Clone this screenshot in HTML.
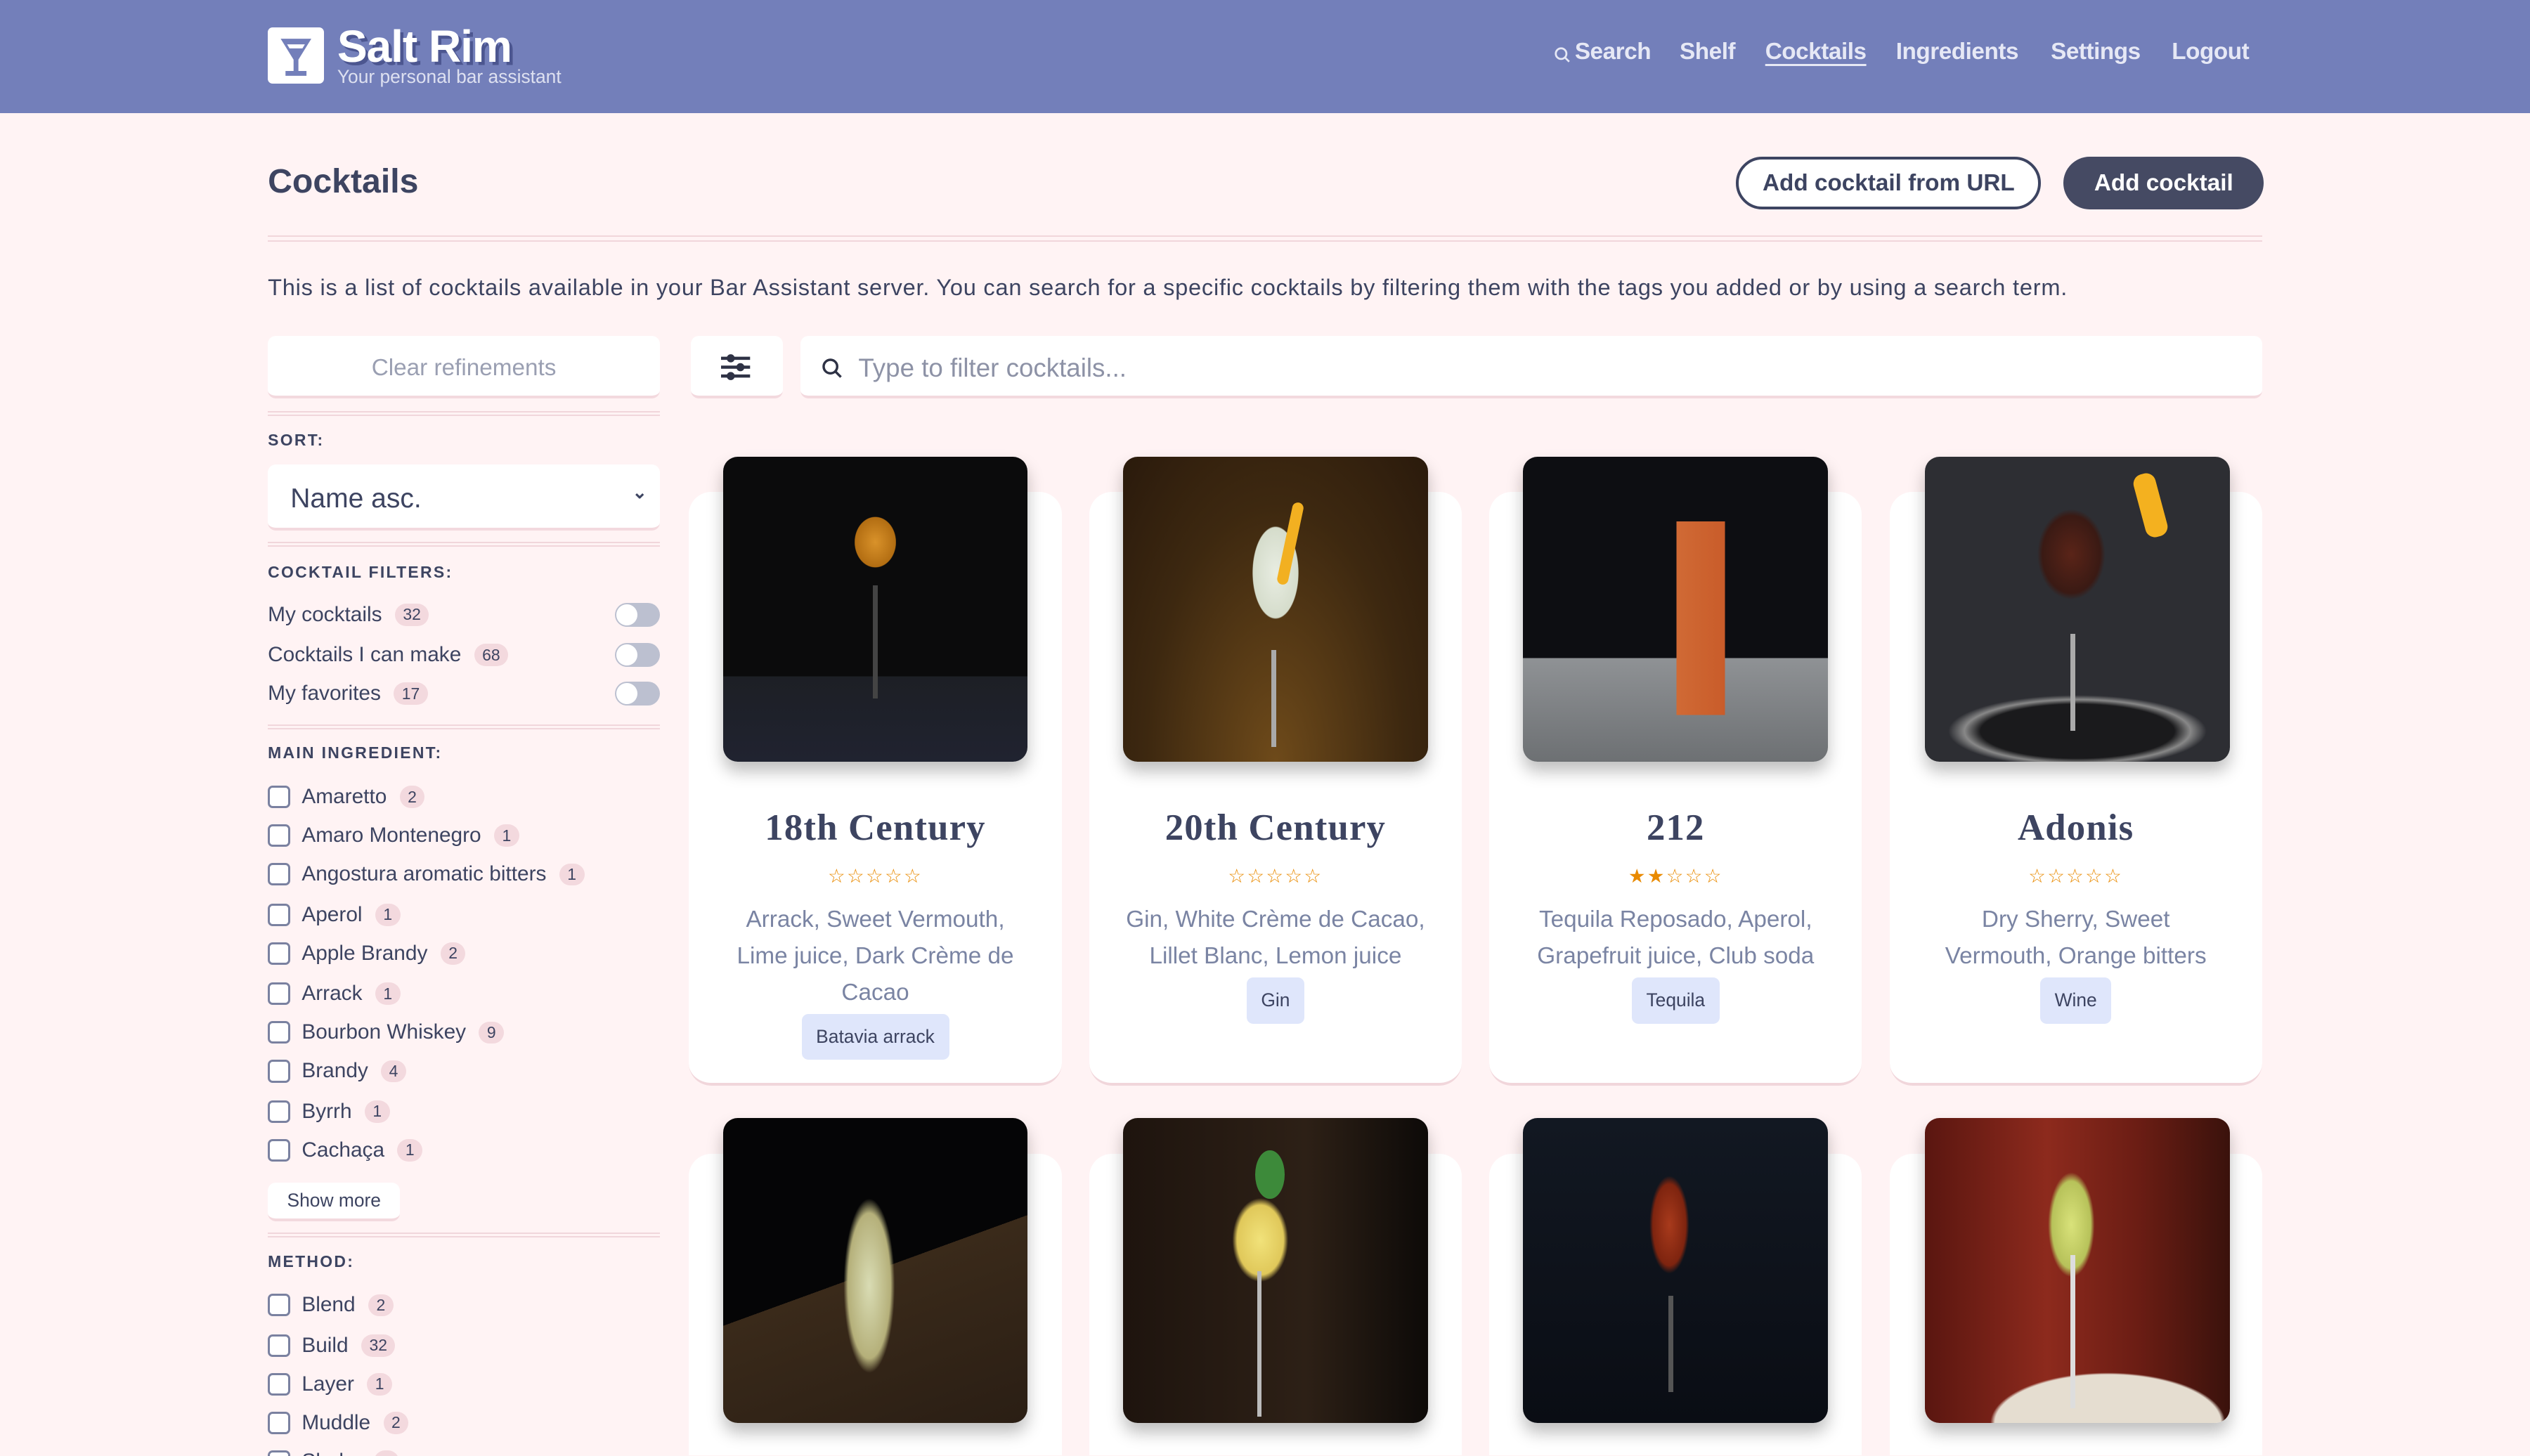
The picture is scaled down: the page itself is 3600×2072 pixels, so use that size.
<!DOCTYPE html>
<html><head><meta charset="utf-8">
<style>
html{zoom:2.29592;overflow:hidden;height:902px}
*{box-sizing:border-box;margin:0;padding:0}
body{width:1568px;height:902px;overflow:hidden;background:#fff3f4;font-family:"Liberation Sans",sans-serif;color:#3d4461;position:relative}
.a{position:absolute}
.hdr{left:0;top:0;width:1568px;height:70px;background:#737fba}
.nav{top:24px;font-size:14.5px;font-weight:bold;color:#e6e8f5;letter-spacing:-0.2px}
.btn{border-radius:17px;font-size:14.5px;font-weight:bold;display:flex;align-items:center;justify-content:center}
.line{left:166px;width:1236px;height:4px;border-top:1px solid #f1d6db;border-bottom:1px solid #f1d6db}
.box{background:#fff;border-radius:5px;border-bottom:2px solid #f3d9de}
.lbl{font-size:10px;font-weight:bold;letter-spacing:1px;left:166px}
.row{left:166px;font-size:13px;display:flex;align-items:center;height:18px}
.cnt{background:#f3d9de;border-radius:8px;font-size:10px;padding:1px 5px;margin-left:8px}
.cb{width:14px;height:14px;border:1.5px solid #7a81a0;border-radius:3px;margin-right:7px;background:#fff}
.tg{right:0;width:28px;height:15px;border-radius:8px;background:#bcc0d0;position:absolute}
.tg:after{content:"";position:absolute;left:1px;top:1px;width:13px;height:13px;border-radius:50%;background:#fff}
.sep{left:166px;width:243px;height:3px;border-top:1px solid #f1d6db;border-bottom:1px solid #f1d6db}
.card{background:#fff;border-radius:14px;width:231px;border-bottom:2px solid #f1d6db}
.img{width:189px;height:189px;border-radius:9px;box-shadow:0 6px 10px rgba(0,0,0,.25);overflow:hidden}
.t{width:231px;text-align:center;white-space:nowrap}
.ttl{font-family:"Liberation Serif",serif;font-size:23px;font-weight:bold;letter-spacing:.5px}
.st{color:#e98a00;font-size:12px;letter-spacing:1px}
.ing{font-size:14.5px;color:#7a84a3;line-height:22.5px}
.tag{display:inline-block;background:#dfe6fb;border-radius:4px;font-size:11.5px;padding:3px 9px;color:#3d4461}
</style></head><body>
<div class="a hdr"></div>
<div class="a" style="left:166px;top:17px;width:35px;height:35px;background:#fff;border-radius:3px">
<svg width="35" height="35" viewBox="0 0 35 35"><path d="M8 7 H27 L19 20 V27 H24 V30 H11 V27 H16 V20 Z" fill="#737fba"/><path d="M12 10.5 H23 L21.5 13 H13.5Z" fill="#fff"/></svg></div>
<div class="a" style="left:209px;top:13px;font-size:28px;font-weight:bold;color:#fff;text-shadow:2px 2px 0 #4c5690;letter-spacing:-0.5px;line-height:32px">Salt Rim</div>
<div class="a" style="left:209px;top:41px;font-size:11.5px;color:#dde0f0">Your personal bar assistant</div>
<div class="a nav" style="left:963px;top:26px"><svg width="10" height="10" viewBox="0 0 10 10"><circle cx="4.5" cy="4.5" r="3.3" stroke="#e6e8f5" stroke-width="1.2" fill="none"/><line x1="7" y1="7" x2="9.5" y2="9.5" stroke="#e6e8f5" stroke-width="1.2"/></svg></div>
<div class="a nav" style="left:976px">Search</div>
<div class="a nav" style="left:1041px">Shelf</div>
<div class="a nav" style="left:1094px;text-decoration:underline;text-underline-offset:3px">Cocktails</div>
<div class="a nav" style="left:1175px">Ingredients</div>
<div class="a nav" style="left:1271px">Settings</div>
<div class="a nav" style="left:1346px">Logout</div>

<div class="a" style="left:166px;top:100px;font-size:21px;font-weight:bold">Cocktails</div>
<div class="a btn" style="left:1076px;top:97px;width:189px;height:33px;border:2px solid #3d4461;background:#fff">Add cocktail from URL</div>
<div class="a btn" style="left:1279px;top:97px;width:124px;height:33px;background:#454a63;color:#fff">Add cocktail</div>
<div class="a line" style="top:146px"></div>
<div class="a" style="left:166px;top:170px;font-size:14.2px;letter-spacing:0.33px;white-space:nowrap">This is a list of cocktails available in your Bar Assistant server. You can search for a specific cocktails by filtering them with the tags you added or by using a search term.</div>

<div class="a box" style="left:166px;top:208px;width:243px;height:39px;color:#9a9fb2;font-size:14.5px;display:flex;align-items:center;justify-content:center;padding-top:3px">Clear refinements</div>
<div class="a box" style="left:428px;top:208px;width:57px;height:39px"><svg class="a" style="left:19px;top:11px" width="18" height="17" viewBox="0 0 18 17"><g stroke="#2e3245" stroke-width="2"><line x1="0" y1="3" x2="18" y2="3"/><line x1="0" y1="8.5" x2="18" y2="8.5"/><line x1="0" y1="14" x2="18" y2="14"/></g><g fill="#2e3245"><circle cx="6" cy="3" r="2.5"/><circle cx="12" cy="8.5" r="2.5"/><circle cx="6" cy="14" r="2.5"/></g></svg></div>
<div class="a box" style="left:496px;top:208px;width:906px;height:39px;display:flex;align-items:center;padding-left:13px;padding-top:3px;font-size:16px;color:#8d92a6"><svg width="13" height="13" viewBox="0 0 13 13" style="margin-right:10px"><circle cx="5.5" cy="5.5" r="4.2" stroke="#2e3245" stroke-width="1.5" fill="none"/><line x1="8.5" y1="8.5" x2="12" y2="12" stroke="#2e3245" stroke-width="1.5"/></svg>Type to filter cocktails...</div>

<div class="a sep" style="top:255px"></div>
<div class="a lbl" style="top:267px">SORT:</div>
<div class="a box" style="left:166px;top:288px;width:243px;height:41px;font-size:17px;display:flex;align-items:center;padding-left:14px;padding-top:3px">Name asc.<span class="a" style="right:8px;top:11px;font-size:11px;font-weight:bold">&#8964;</span></div>
<div class="a sep" style="top:336px"></div>
<div class="a lbl" style="top:349px">COCKTAIL FILTERS:</div>
<div class="a row" style="top:372px;width:243px">My cocktails<span class="cnt">32</span><span class="tg"></span></div>
<div class="a row" style="top:397px;width:243px">Cocktails I can make<span class="cnt">68</span><span class="tg"></span></div>
<div class="a row" style="top:421px;width:243px">My favorites<span class="cnt">17</span><span class="tg"></span></div>
<div class="a sep" style="top:449px"></div>
<div class="a lbl" style="top:461px">MAIN INGREDIENT:</div>
<div class="a row" style="top:485px"><span class="cb"></span>Amaretto<span class="cnt">2</span></div>
<div class="a row" style="top:509px"><span class="cb"></span>Amaro Montenegro<span class="cnt">1</span></div>
<div class="a row" style="top:533px"><span class="cb"></span>Angostura aromatic bitters<span class="cnt">1</span></div>
<div class="a row" style="top:558px"><span class="cb"></span>Aperol<span class="cnt">1</span></div>
<div class="a row" style="top:582px"><span class="cb"></span>Apple Brandy<span class="cnt">2</span></div>
<div class="a row" style="top:607px"><span class="cb"></span>Arrack<span class="cnt">1</span></div>
<div class="a row" style="top:631px"><span class="cb"></span>Bourbon Whiskey<span class="cnt">9</span></div>
<div class="a row" style="top:655px"><span class="cb"></span>Brandy<span class="cnt">4</span></div>
<div class="a row" style="top:680px"><span class="cb"></span>Byrrh<span class="cnt">1</span></div>
<div class="a row" style="top:704px"><span class="cb"></span>Cachaça<span class="cnt">1</span></div>
<div class="a box" style="left:166px;top:733px;width:82px;height:24px;font-size:11.5px;display:flex;align-items:center;justify-content:center">Show more</div>
<div class="a sep" style="top:764px"></div>
<div class="a lbl" style="top:776px">METHOD:</div>
<div class="a row" style="top:800px"><span class="cb"></span>Blend<span class="cnt">2</span></div>
<div class="a row" style="top:825px"><span class="cb"></span>Build<span class="cnt">32</span></div>
<div class="a row" style="top:849px"><span class="cb"></span>Layer<span class="cnt">1</span></div>
<div class="a row" style="top:873px"><span class="cb"></span>Muddle<span class="cnt">2</span></div>
<div class="a row" style="top:897px"><span class="cb"></span>Shake<span class="cnt">2</span></div>

<div class="a card" style="left:427px;top:305px;height:368px"></div>
<div class="a card" style="left:675px;top:305px;height:368px"></div>
<div class="a card" style="left:923px;top:305px;height:368px"></div>
<div class="a card" style="left:1171px;top:305px;height:368px"></div>
<div class="a card" style="left:427px;top:715px;height:187px;border-bottom:none;border-radius:14px 14px 0 0"></div>
<div class="a card" style="left:675px;top:715px;height:187px;border-bottom:none;border-radius:14px 14px 0 0"></div>
<div class="a card" style="left:923px;top:715px;height:187px;border-bottom:none;border-radius:14px 14px 0 0"></div>
<div class="a card" style="left:1171px;top:715px;height:187px;border-bottom:none;border-radius:14px 14px 0 0"></div>

<div class="a img" style="left:448px;top:283px;background:radial-gradient(ellipse 18px 22px at 50% 28%,#d9922a 0,#b26d12 70%,transparent 72%),linear-gradient(#0b0b0c 72%,#1d1f25 72%,#202330 100%)"><div class="a" style="left:93px;top:80px;width:3px;height:70px;background:#444"></div></div>
<div class="a img" style="left:696px;top:283px;background:radial-gradient(ellipse 20px 40px at 50% 38%,#e8ede2 0,#d5dccb 70%,transparent 72%),radial-gradient(ellipse at 50% 100%,#6e4a1a,#3d2810 60%,#2a1a0c)"><div class="a" style="left:92px;top:120px;width:3px;height:60px;background:#aaa"></div><div class="a" style="left:100px;top:28px;width:7px;height:52px;background:#f2b021;border-radius:4px;transform:rotate(12deg)"></div></div>
<div class="a img" style="left:944px;top:283px;background:linear-gradient(90deg,transparent 70px,#d06a35 70px,#c95c2a 100px,transparent 100px) 25px 40px/100% 120px no-repeat,linear-gradient(#0d0e12 66%,#8f9295 66%,#6d7073 100%)"><div class="a" style="left:70px;top:0;width:1px;height:1px"></div></div>
<div class="a img" style="left:1193px;top:283px;background:radial-gradient(ellipse 30px 40px at 48% 32%,#5a2418 0,#3a1a14 60%,transparent 70%),radial-gradient(ellipse 100px 28px at 50% 90%,#1a1a1c 60%,#888 70%,#2d2e33 80%),linear-gradient(#4a4b50,#2d2e33)"><div class="a" style="left:133px;top:10px;width:14px;height:40px;background:#f4b11f;border-radius:6px;transform:rotate(-15deg)"></div><div class="a" style="left:90px;top:110px;width:3px;height:60px;background:#aaa"></div></div>

<div class="t a" style="left:427px;top:500px"><div class="ttl">18th Century</div></div>
<div class="t a" style="left:675px;top:500px"><div class="ttl">20th Century</div></div>
<div class="t a" style="left:923px;top:500px"><div class="ttl">212</div></div>
<div class="t a" style="left:1171px;top:500px"><div class="ttl">Adonis</div></div>

<div class="t a st" style="left:427px;top:536px">☆☆☆☆☆</div>
<div class="t a st" style="left:675px;top:536px">☆☆☆☆☆</div>
<div class="t a st" style="left:923px;top:536px">★★☆☆☆</div>
<div class="t a st" style="left:1171px;top:536px">☆☆☆☆☆</div>

<div class="t a ing" style="left:427px;top:559px">Arrack, Sweet Vermouth,<br>Lime juice, Dark Crème de<br>Cacao<div style="margin-top:2px"><span class="tag">Batavia arrack</span></div></div>
<div class="t a ing" style="left:675px;top:559px">Gin, White Crème de Cacao,<br>Lillet Blanc, Lemon juice<div style="margin-top:2px"><span class="tag">Gin</span></div></div>
<div class="t a ing" style="left:923px;top:559px">Tequila Reposado, Aperol,<br>Grapefruit juice, Club soda<div style="margin-top:2px"><span class="tag">Tequila</span></div></div>
<div class="t a ing" style="left:1171px;top:559px">Dry Sherry, Sweet<br>Vermouth, Orange bitters<div style="margin-top:2px"><span class="tag">Wine</span></div></div>

<div class="a img" style="left:448px;top:693px;background:radial-gradient(ellipse 22px 75px at 48% 55%,#d9dcb4 0,#b5b07a 60%,transparent 72%),linear-gradient(160deg,#050506 50%,#3a2a1a 50%,#2a1e14)"></div>
<div class="a img" style="left:696px;top:693px;background:radial-gradient(ellipse 24px 36px at 45% 40%,#f1e27a 0,#e0c85a 60%,transparent 72%),linear-gradient(90deg,#1e140e,#2d2016 60%,#0d0a08)"><div class="a" style="left:83px;top:95px;width:3px;height:90px;background:#bbb"></div><div class="a" style="left:82px;top:20px;width:18px;height:30px;background:#3d8a3a;border-radius:50%"></div></div>
<div class="a img" style="left:944px;top:693px;background:radial-gradient(ellipse 17px 42px at 48% 35%,#a83a1c 0,#7e240f 60%,transparent 72%),linear-gradient(#121822,#0a0d14)"><div class="a" style="left:90px;top:110px;width:3px;height:60px;background:#555"></div></div>
<div class="a img" style="left:1193px;top:693px;background:radial-gradient(ellipse 20px 45px at 48% 35%,#d9e27a 0,#b7c25a 60%,transparent 72%),radial-gradient(ellipse 140px 60px at 60% 100%,#e5ddd0 50%,transparent 52%),linear-gradient(90deg,#5a1610,#8d2a1d 40%,#6b1d14 70%,#3a120c)"><div class="a" style="left:90px;top:85px;width:3px;height:95px;background:#ddd"></div></div>
</body></html>
